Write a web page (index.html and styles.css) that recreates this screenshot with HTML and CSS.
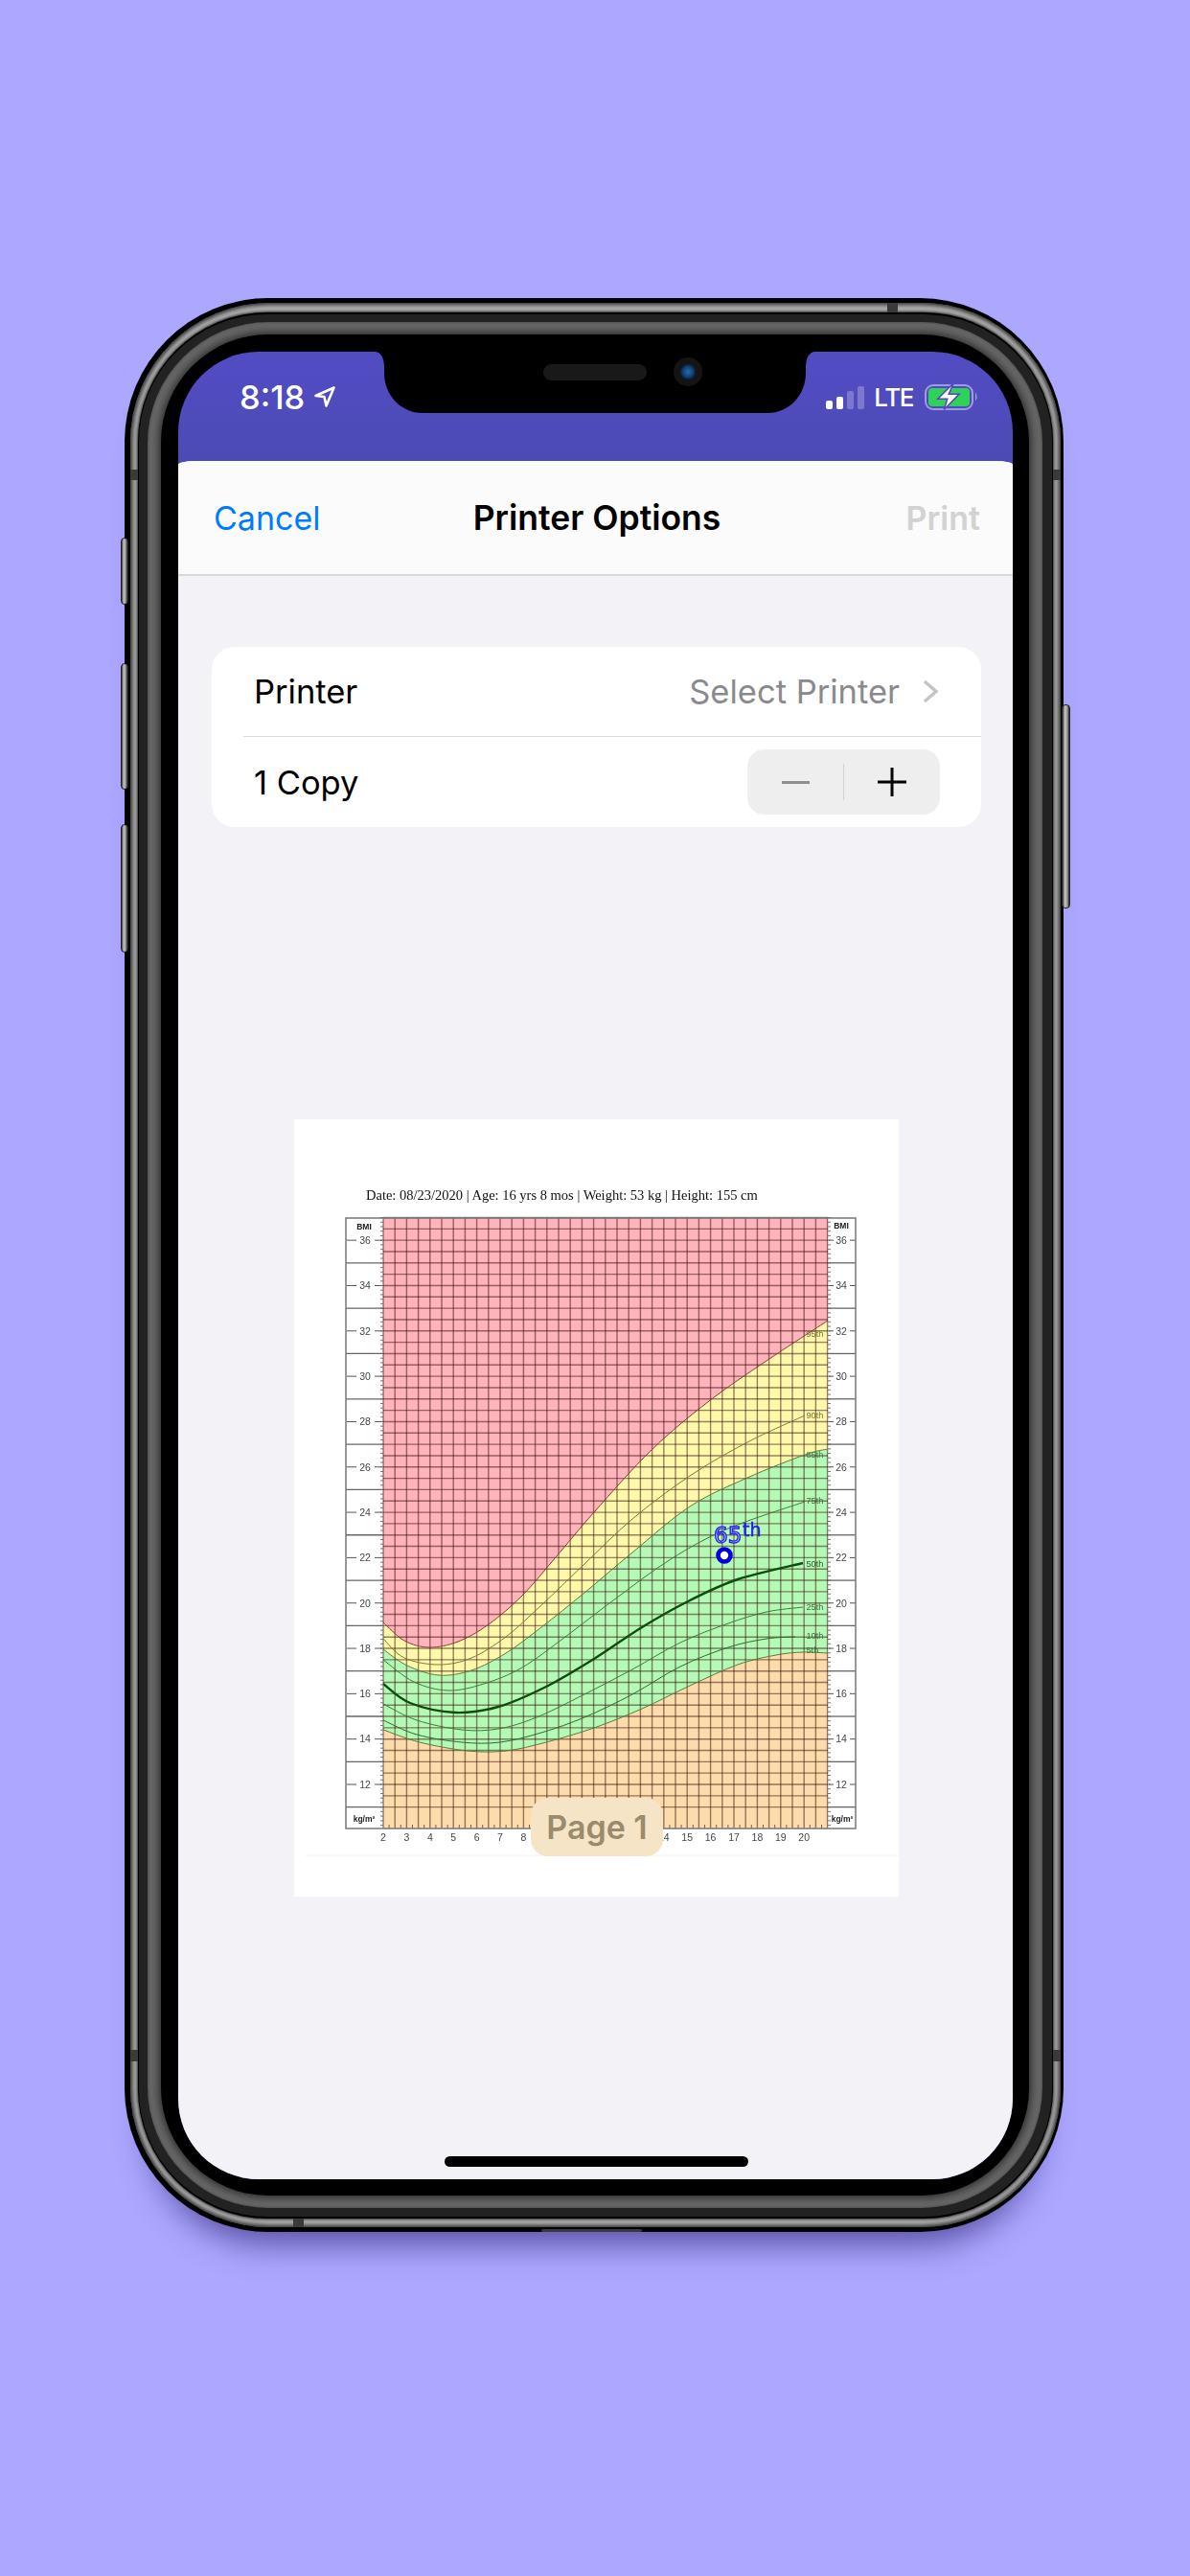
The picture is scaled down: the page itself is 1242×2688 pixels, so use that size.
FILE: index.html
```html
<!DOCTYPE html>
<html lang="en">
<head>
  <meta charset="UTF-8" />
  <title>Printer Options</title>
  <link rel="stylesheet" href="styles.css">
</head>
<body>

  <div class="phone">
    <span class="side-btn side-btn-1"></span>
    <span class="side-btn side-btn-2"></span>
    <span class="side-btn side-btn-3"></span>
    <span class="side-btn side-btn-power"></span>

    <span class="band band-top"></span>
    <span class="band band-left-a"></span>
    <span class="band band-left-b"></span>
    <span class="band band-right-a"></span>
    <span class="band band-right-b"></span>
    <span class="band band-bottom"></span>
    <span class="band band-port"></span>

    <div class="ring-silver">
      <div class="ring-dark">
        <div class="ring-gray">
          <div class="bezel">
            <div class="screen">

              <div class="status">
                <div class="status-left">
                  <span class="time">8:18</span>
                  <svg class="arrow" viewBox="0 0 24 24"><path d="M21.5 2.5 L2.5 11 L11.5 12 L13.5 21.5 Z" /></svg>
                </div>
                <div class="status-right">
                  <div class="signal">
                    <i class="bar bar-1"></i>
                    <i class="bar bar-2"></i>
                    <i class="bar bar-3 off"></i>
                    <i class="bar bar-4 off"></i>
                  </div>
                  <span class="lte">LTE</span>
                  <svg class="battery" viewBox="0 0 56 30">
                    <rect class="batt-case" x="1" y="3" width="49" height="25" rx="8" />
                    <rect class="batt-level" x="4" y="6" width="43" height="19" rx="4" />
                    <path class="batt-cap" d="M53 11 C55 12 55 18 53 19 Z" />
                    <path class="batt-bolt" d="M30.3 .7 L13.7 17.3 L23.7 17.3 L20.3 28.5 L36 12.3 L25.3 12.3 Z" />
                  </svg>
                </div>
              </div>

              <svg class="notch" viewBox="0 0 460 64">
                <path d="M0 0 C6 0 10 6 10 16 V22 C10 46 28 64 50 64 H410 C432 64 450 46 450 22 V16 C450 6 454 0 460 0 Z" />
              </svg>
              <span class="speaker"></span>
              <span class="camera"></span>

              <div class="sheet">
                <div class="nav">
                  <span class="nav-cancel">Cancel</span>
                  <span class="nav-title">Printer Options</span>
                  <span class="nav-print">Print</span>
                </div>

                <div class="content">
                  <div class="card">
                    <div class="row row-first">
                      <span>Printer</span>
                      <div class="row-value">
                        <span>Select Printer</span>
                        <svg class="chevron" viewBox="0 0 16 25"><path d="M2 2 L14 12.5 L2 23" /></svg>
                      </div>
                    </div>
                    <div class="row">
                      <span>1 Copy</span>
                      <div class="stepper">
                        <div class="step"><i class="minus"></i></div>
                        <i class="step-divider"></i>
                        <div class="step"><svg class="plus" viewBox="0 0 30 30"><path d="M15 0 V30 M0 15 H30" /></svg></div>
                      </div>
                    </div>
                  </div>

                  <div class="page">
                    <svg id="chart" class="chart" viewBox="307 1168 631 811"></svg>
                    <div class="page-pill">Page 1</div>
                  </div>
                </div>
              </div>

              <div class="home-bar"></div>
            </div>
          </div>
        </div>
      </div>
    </div>
  </div>

  <script src="chart.js"></script>
</body>
</html>
```

FILE: styles.css
```css
* {
  box-sizing: border-box;
}
body {
  margin: 0;
  height: 2688px;
  overflow: hidden;
  padding: 311px 0 0 130px;
  background: #aca7ff;
  font-family: Inter, "Noto Sans", sans-serif;
}

/* phone frame */
.phone {
  position: relative;
  width: 980px;
  height: 2018px;
  padding: 5px 3px 5px 6px;
  background: #000;
  border-radius: 150px;
  box-shadow: 0 38px 34px -26px rgba(58, 50, 130, 0.75);
}
.ring-silver {
  height: 100%;
  padding: 10px 8px 9px 8px;
  background: #adadad;
  border-radius: 145px;
  box-shadow: inset 0 0 4px 2px rgba(0, 0, 0, 0.75);
}
.ring-dark {
  height: 100%;
  padding: 8px 10px 9px 9px;
  background: #222;
  border: solid #000;
  border-width: 2px 1px 2px 1px;
  border-radius: 135px;
  box-shadow: 0 0 3px 1px rgba(0, 0, 0, 0.75);
}
.ring-gray {
  height: 100%;
  padding: 13px 14px 13px 14px;
  background: #666;
  border-radius: 126px;
  box-shadow: inset 0 0 3px rgba(0, 0, 0, 0.4);
}
.bezel {
  height: 100%;
  padding: 18px 17px 17px 18px;
  background: #000;
  border-radius: 112px;
  box-shadow: 0 0 9px 2px rgba(0, 0, 0, 0.6);
}
.screen {
  position: relative;
  display: flex;
  flex-direction: column;
  height: 100%;
  overflow: hidden;
  background: linear-gradient(#524cc4, #4c4bb4 114px);
  border-radius: 84px;
}

.side-btn {
  position: absolute;
  left: -4px;
  width: 8px;
  background: linear-gradient(90deg, #333, #c4c4c4 35%, #999 70%, #222);
  border: 1px solid #222;
  border-radius: 4px;
}
.side-btn-1 { top: 250px; height: 70px; }
.side-btn-2 { top: 381px; height: 132px; }
.side-btn-3 { top: 549px; height: 134px; }
.side-btn-power {
  left: auto;
  right: -7px;
  top: 424px;
  width: 9px;
  height: 213px;
}

.band {
  position: absolute;
  z-index: 1;
  background: #3a3a3a;
}
.band-top { left: 796px; top: 5px; width: 11px; height: 10px; }
.band-left-a { left: 6px; top: 179px; width: 8px; height: 11px; }
.band-left-b { left: 6px; top: 1828px; width: 8px; height: 12px; }
.band-right-a { left: 969px; top: 179px; width: 8px; height: 11px; }
.band-right-b { left: 969px; top: 1828px; width: 8px; height: 12px; }
.band-bottom { left: 176px; top: 2004px; width: 11px; height: 9px; }
.band-port { left: 435px; top: 2015px; width: 105px; height: 3px; border-radius: 3px; }

/* status bar */
.status {
  display: flex;
  flex: none;
  justify-content: space-between;
  align-items: center;
  height: 114px;
  padding: 0 36px 20px 64px;
  color: #fff;
}
.status-left,
.status-right {
  display: flex;
  align-items: center;
}
.time {
  font-size: 34.5px;
  font-weight: 500;
}
.arrow {
  width: 24px;
  height: 24px;
  margin-left: 9px;
  fill: none;
  stroke: #fff;
  stroke-width: 2.6;
  stroke-linejoin: round;
}
.signal {
  display: flex;
  align-items: flex-end;
  gap: 4px;
  height: 24px;
  margin-top: 2px;
}
.bar {
  width: 7px;
  background: #fff;
  border-radius: 2px;
}
.bar-1 { height: 9px; }
.bar-2 { height: 13px; }
.bar-3 { height: 19px; }
.bar-4 { height: 24px; }
.bar.off { background: rgba(255, 255, 255, 0.25); }
.lte {
  margin-left: 10px;
  font-size: 26px;
  font-weight: 500;
  letter-spacing: -1.4px;
}
.battery {
  width: 56px;
  height: 30px;
  margin-left: 12px;
}
.batt-case {
  fill: none;
  stroke: rgba(255, 255, 255, 0.45);
  stroke-width: 2;
}
.batt-level { fill: #30d158; }
.batt-cap { fill: rgba(255, 255, 255, 0.45); }
.batt-bolt {
  fill: #fff;
  stroke: #4f4bbd;
  stroke-width: 1.6;
}

/* notch */
.notch {
  position: absolute;
  left: 205px;
  top: 0;
  width: 460px;
  height: 64px;
  fill: #000;
}
.speaker {
  position: absolute;
  left: 381px;
  top: 13px;
  width: 108px;
  height: 17px;
  background: #191919;
  border-radius: 9px;
}
.camera {
  position: absolute;
  left: 517px;
  top: 6px;
  width: 30px;
  height: 30px;
  background: radial-gradient(circle at 50% 50%, #1f6fb5 0, #123a66 6px, #0b1a2c 8px, #141414 9px);
  border-radius: 50%;
}

/* sheet */
.sheet {
  display: flex;
  flex: 1;
  flex-direction: column;
  background: #f2f2f7;
  border-radius: 18px 18px 0 0 / 4px 4px 0 0;
  overflow: hidden;
}
.nav {
  display: grid;
  flex: none;
  grid-template-columns: 1fr auto 1fr;
  align-items: center;
  height: 120px;
  padding: 0 34px 0 37px;
  background: #fbfbfc;
  border-bottom: 2px solid #d9d9dc;
  font-size: 34px;
}
.nav-cancel {
  color: #007aff;
}
.nav-title {
  color: #000;
  font-size: 35.5px;
  font-weight: 600;
}
.nav-print {
  color: #d2d2d2;
  font-weight: 600;
  text-align: right;
}
.content {
  flex: 1;
  padding-top: 74px;
}

/* options card */
.card {
  margin: 0 33px 0 35px;
  background: #fff;
  border-radius: 24px;
  font-size: 34.5px;
  color: #000;
}
.row {
  display: flex;
  justify-content: space-between;
  align-items: center;
  height: 94px;
  margin-left: 33px;
  padding: 0 43px 0 11px;
}
.row-first {
  height: 94px;
  padding-right: 45px;
  border-bottom: 1px solid #dcdcdf;
}
.row-value {
  display: flex;
  align-items: center;
  gap: 24px;
  color: #8a8a8e;
}
.chevron {
  width: 16px;
  height: 25px;
  fill: none;
  stroke: #c4c4c7;
  stroke-width: 3.4;
}
.stepper {
  display: flex;
  align-items: center;
  width: 201px;
  height: 68px;
  background: #eeeeef;
  border-radius: 18px;
}
.step {
  display: flex;
  flex: 1;
  justify-content: center;
  align-items: center;
}
.step-divider {
  width: 1px;
  height: 38px;
  background: #d2d2d4;
}
.minus {
  width: 29px;
  height: 3px;
  background: #8f8f8f;
}
.plus {
  width: 30px;
  height: 30px;
  fill: none;
  stroke: #000;
  stroke-width: 3;
}

/* print preview */
.page {
  position: relative;
  width: 631px;
  height: 811px;
  margin: 305px 0 0 121px;
  background: #fff;
}
.chart {
  display: block;
  width: 631px;
  height: 811px;
  filter: blur(0.4px);
}
.page-pill {
  position: absolute;
  left: 247px;
  top: 708px;
  display: flex;
  justify-content: center;
  align-items: center;
  width: 138px;
  height: 61px;
  background: #f5e4c6;
  border-radius: 18px;
  color: #9b8b6e;
  font-size: 34px;
  font-weight: 600;
}
.home-bar {
  position: absolute;
  left: 278px;
  bottom: 13px;
  width: 317px;
  height: 11px;
  background: #000;
  border-radius: 6px;
}

/* chart text */
.chart-date {
  font-family: "Liberation Serif", serif;
  font-size: 14.5px;
  fill: #111;
}
.axis-num {
  font-family: "Liberation Sans", sans-serif;
  font-size: 10.5px;
  fill: #444;
  text-anchor: middle;
}
.axis-unit {
  font-family: "Liberation Sans", sans-serif;
  font-size: 8.5px;
  font-weight: 700;
  fill: #222;
  text-anchor: middle;
}
.pct-label {
  font-family: "Liberation Sans", sans-serif;
  font-size: 9.2px;
}
.mark-65 {
  font-family: "DejaVu Sans", sans-serif;
  font-size: 23px;
  fill: #d5deff;
  stroke: #2020f0;
  stroke-width: 1.4;
}
.mark-th {
  font-family: "DejaVu Sans", sans-serif;
  font-size: 19px;
  fill: #2020f0;
  stroke: #2020f0;
  stroke-width: 0.5;
}
```

FILE: chart.js
```js
// BMI-for-age chart, drawn in the coordinates of the screenshot
const svg = document.getElementById("chart");
const NS = "http://www.w3.org/2000/svg";

const LEFT = 400, RIGHT = 864, TOP = 1271, BOTTOM = 1908;
const OUT_L = 361, OUT_R = 893;

function yOf(bmi) { return 1862 - (bmi - 12) * 23.66; }

function add(tag, attrs, text) {
  const el = document.createElementNS(NS, tag);
  for (const k in attrs) el.setAttribute(k, attrs[k]);
  if (text) el.textContent = text;
  svg.appendChild(el);
  return el;
}

function line(x1, y1, x2, y2, stroke, width) {
  add("line", { x1, y1, x2, y2, stroke, "stroke-width": width });
}

// catmull-rom through the points
function smooth(p) {
  let d = "M" + p[0][0] + " " + p[0][1];
  for (let i = 0; i < p.length - 1; i++) {
    const a = p[i - 1] || p[i], b = p[i], c = p[i + 1], e = p[i + 2] || c;
    const c1x = b[0] + (c[0] - a[0]) / 6, c1y = b[1] + (c[1] - a[1]) / 6;
    const c2x = c[0] - (e[0] - b[0]) / 6, c2y = c[1] - (e[1] - b[1]) / 6;
    d += " C" + c1x + " " + c1y + " " + c2x + " " + c2y + " " + c[0] + " " + c[1];
  }
  return d;
}

const p95 = [[400,1693],[422,1712],[448,1719],[478,1713],[510,1695],[545,1665],[580,1625],[620,1578],[680,1513],[740,1462],[800,1420],[864,1378]];
const p90 = [[400,1710],[422,1730],[458,1737],[492,1730],[528,1708],[565,1675],[610,1632],[660,1585],[720,1540],[780,1505],[840,1477]];
const p85 = [[400,1721],[425,1738],[458,1748],[492,1743],[528,1725],[565,1698],[610,1662],[660,1620],[720,1572],[780,1542],[840,1518],[864,1512]];
const p75 = [[400,1732],[432,1755],[468,1764],[505,1757],[545,1740],[590,1708],[640,1670],[700,1627],[760,1595],[840,1567]];
const p50 = [[400,1757],[428,1777],[475,1787],[520,1781],[570,1760],[620,1731],[670,1698],[720,1670],[770,1648],[838,1631]];
const p25 = [[400,1778],[435,1795],[482,1805],[520,1804],[560,1792],[610,1768],[660,1742],[710,1714],[760,1694],[800,1682],[838,1677]];
const p10 = [[400,1795],[435,1810],[482,1818],[522,1818],[565,1808],[610,1792],[660,1768],[710,1739],[760,1719],[800,1710],[830,1708]];
const p5 = [[400,1805],[438,1818],[488,1827],[528,1827],[570,1818],[620,1803],[670,1783],[720,1759],[770,1737],[810,1727],[838,1724],[864,1725]];

// zones, bottom up
add("rect", { x: LEFT, y: TOP, width: RIGHT - LEFT, height: BOTTOM - TOP, fill: "#fddcab" });
[[p5, "#b4fab4"], [p85, "#fef9aa"], [p95, "#ffb3ba"]].forEach(function (z) {
  add("path", { d: smooth(z[0]) + " L" + RIGHT + " " + TOP + " L" + LEFT + " " + TOP + " Z", fill: z[1] });
});

// grid
for (let x = LEFT; x <= RIGHT; x += 12.2) line(x, TOP, x, BOTTOM, "rgba(50,10,10,.5)", 1.4);
for (let b = 37; b >= 11; b -= 0.5) line(LEFT, yOf(b), RIGHT, yOf(b), "rgba(50,10,10,.5)", 1.4);
for (let x = LEFT + 6.1; x <= RIGHT; x += 12.2) line(x, BOTTOM - 4, x, BOTTOM, "rgba(50,10,10,.6)", 1);

// percentile lines
[[p90, "#7d7a3a", 1], [p75, "#3e7a3e", 1], [p25, "#3e7a3e", 1], [p10, "#2f6a2f", 1],
 [p95, "#8a3a3a", 1], [p85, "#5c7a3a", 1], [p5, "#5c7a3a", 1], [p50, "#0d4d0d", 2.4]].forEach(function (c) {
  add("path", { d: smooth(c[0]), fill: "none", stroke: c[1], "stroke-width": c[2] });
});

// margins
for (let b = 11; b <= 35; b += 2) {
  line(OUT_L, yOf(b), LEFT, yOf(b), "#666", 1.3);
  line(RIGHT, yOf(b), OUT_R, yOf(b), "#666", 1.3);
}
for (let b = 12; b <= 36; b += 2) {
  const y = yOf(b);
  line(362, y, 372, y, "#555", 1);
  line(391, y, 399, y, "#555", 1);
  line(865, y, 870, y, "#555", 1);
  line(887, y, 893, y, "#555", 1);
  add("text", { x: 381, y: y + 3.8, class: "axis-num" }, String(b));
  add("text", { x: 878, y: y + 3.8, class: "axis-num" }, String(b));
}
for (let b = 10.2; b < 37; b += 0.2) {
  line(397, yOf(b), LEFT, yOf(b), "#666", 0.9);
  line(RIGHT, yOf(b), 867, yOf(b), "#666", 0.9);
}
add("rect", { x: OUT_L, y: TOP, width: OUT_R - OUT_L, height: BOTTOM - TOP, fill: "none", stroke: "#777", "stroke-width": 1.5 });

add("text", { x: 380, y: 1283, class: "axis-unit" }, "BMI");
add("text", { x: 878, y: 1282, class: "axis-unit" }, "BMI");
add("text", { x: 380, y: 1901, class: "axis-unit" }, "kg/m²");
add("text", { x: 879, y: 1901, class: "axis-unit" }, "kg/m²");

// 9 to 13 sit under the page pill
for (let a = 2; a <= 20; a++) {
  if (a >= 9 && a <= 13) continue;
  add("text", { x: LEFT + (a - 2) * 24.4, y: 1921, class: "axis-num" }, String(a));
}

// percentile names at the right end
[["95th", 1395, "#77773a"], ["90th", 1480, "#77773a"], ["85th", 1521, "#3f7a3f"], ["75th", 1569, "#3f6a3f"],
 ["50th", 1635, "#2f5a2f"], ["25th", 1680, "#3f6a3f"], ["10th", 1710, "#3f6a3f"], ["5th", 1725, "#3f6a3f"]].forEach(function (l) {
  add("text", { x: 841.5, y: l[1], class: "pct-label", fill: l[2] }, l[0]);
});

add("text", { x: 382, y: 1252, class: "chart-date" }, "Date: 08/23/2020 | Age: 16 yrs 8 mos | Weight: 53 kg | Height: 155 cm");

// patient marker
add("text", { x: 745, y: 1610, class: "mark-65" }, "65");
add("text", { x: 775, y: 1603, class: "mark-th" }, "th");
add("circle", { cx: 756, cy: 1623, r: 6.5, fill: "#fff", stroke: "#0000e0", "stroke-width": 4.6 });

line(318, 1936, 938, 1936, "#f2f2f2", 1);
```
